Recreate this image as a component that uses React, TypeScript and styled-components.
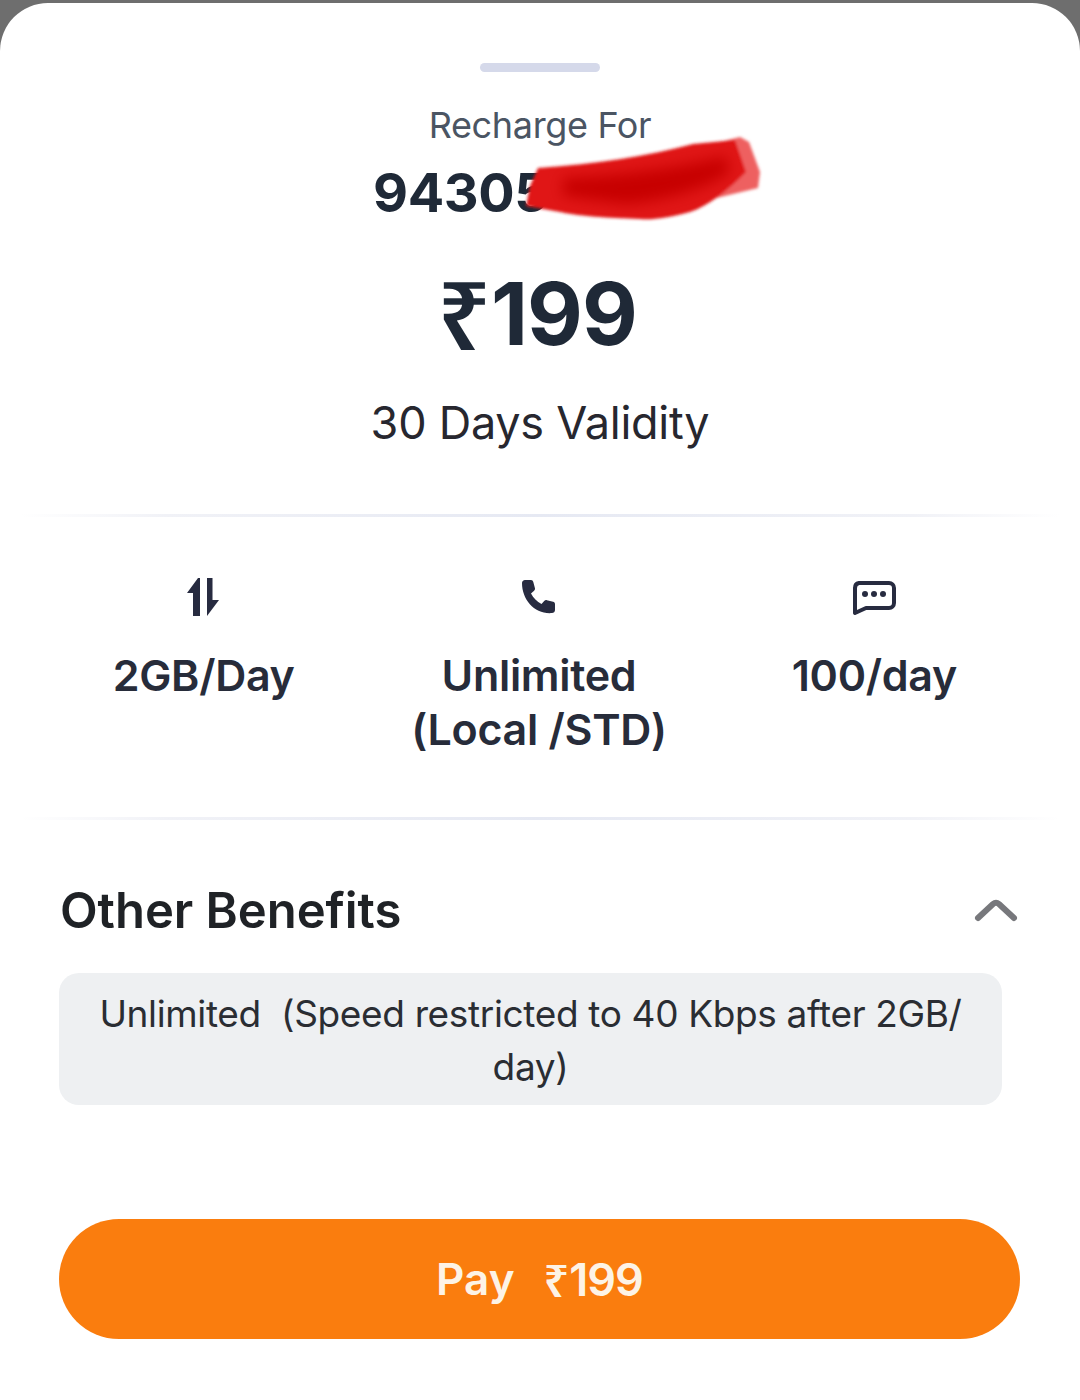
import React from "react";
import styled, { createGlobalStyle } from "styled-components";

const Global = createGlobalStyle`
  html, body { margin: 0; padding: 0; background: #6e6e6e; }
  body { font-family: Inter, "Noto Sans", sans-serif; }
`;

const Page = styled.div`
  width: 1080px;
  height: 1400px;
  padding-top: 3px;
  box-sizing: border-box;
  overflow: hidden;
`;

const Sheet = styled.main`
  height: 1397px;
  background: #fff;
  border-radius: 48px 48px 0 0;
  display: flex;
  flex-direction: column;
  align-items: center;
  color: #1f2937;
`;

const Handle = styled.div`
  width: 120px;
  height: 9px;
  margin-top: 60px;
  border-radius: 5px;
  background: #d5d9ea;
`;

const Label = styled.div`
  margin-top: 30px;
  font-size: 36px;
  line-height: 46px;
  letter-spacing: -0.35px;
  color: #4b5563;
`;

const NumberRow = styled.div`
  position: relative;
  width: 334px;
  margin-top: 13px;
  height: 64px;
  font-size: 54px;
  line-height: 64px;
  font-weight: 700;
  letter-spacing: -0.4px;
  color: #1f2937;
`;

const Scribble = styled.svg`
  position: absolute;
  left: 145px;
  top: -35px;
  width: 250px;
  height: 100px;
  overflow: visible;
`;

const Price = styled.div`
  margin-top: 34px;
  height: 110px;
  padding-right: 6px;
  display: flex;
  align-items: center;
  color: #1f2937;
`;

const Rupee = styled.span<{ $size: number }>`
  font-family: "Noto Sans", Roboto, sans-serif;
  font-size: ${(p) => p.$size}px;
  font-weight: 600;
`;

const Amount = styled.span<{ $size: number; $weight: number }>`
  font-family: Inter, sans-serif;
  font-size: ${(p) => p.$size}px;
  font-weight: ${(p) => p.$weight};
  letter-spacing: -1px;
`;

const Validity = styled.div`
  margin-top: 27px;
  font-size: 45px;
  line-height: 54px;
  letter-spacing: -0.25px;
  color: #27272f;
`;

const Divider = styled.div`
  align-self: stretch;
  flex: none;
  height: 3px;
  margin: 0 20px;
  background: linear-gradient(90deg, #ffffff 0%, #f1f2f7 14%, #e6e9f3 50%, #f1f2f7 86%, #ffffff 100%);
`;

const FirstDivider = styled(Divider)`
  margin-top: 64px;
`;

const Stats = styled.section`
  align-self: stretch;
  height: 300px;
  box-sizing: border-box;
  padding: 59px 38px 0 36px;
  display: grid;
  grid-template-columns: repeat(3, 1fr);
  text-align: center;
`;

const Stat = styled.div`
  display: flex;
  flex-direction: column;
  align-items: center;
`;

const StatIcon = styled.svg`
  width: 48px;
  height: 48px;
  color: #272b40;
`;

const StatText = styled.div`
  margin-top: 24px;
  font-size: 43px;
  line-height: 54px;
  font-weight: 600;
  letter-spacing: -0.3px;
  color: #272c3a;
  white-space: pre-line;
`;

const BenefitsHead = styled.header`
  align-self: stretch;
  display: flex;
  align-items: center;
  justify-content: space-between;
  margin-top: 61px;
  padding: 0 60px;
  height: 60px;
`;

const BenefitsTitle = styled.h2`
  margin: 0;
  font-size: 49px;
  line-height: 60px;
  font-weight: 600;
  letter-spacing: -0.05px;
  color: #1f2226;
`;

const Chevron = styled.svg`
  width: 46px;
  height: 28px;
  color: #77787c;
`;

const Note = styled.div`
  align-self: flex-start;
  width: 943px;
  height: 132px;
  box-sizing: border-box;
  margin: 32px 0 0 59px;
  padding: 14px 30px 0;
  border-radius: 20px;
  background: #eef0f2;
  font-size: 37px;
  line-height: 53px;
  letter-spacing: -0.35px;
  text-align: center;
  color: #2a2d33;
  white-space: pre-wrap;
`;

const PayButton = styled.button`
  align-self: flex-start;
  width: 961px;
  height: 120px;
  margin: 114px 0 0 59px;
  border: 0;
  border-radius: 60px;
  background: #fa7d0e;
  color: #fdf3e6;
  font-family: Inter, sans-serif;
  font-size: 44px;
  font-weight: 600;
  display: flex;
  align-items: center;
  justify-content: center;
  gap: 29px;
`;

const PayAmount = styled.span`
  display: flex;
  align-items: center;
`;

export default function App() {
  return (
    <Page>
      <Global />
      <Sheet>
        <Handle />
        <Label>Recharge For</Label>
        <NumberRow>
          94305
          <Scribble viewBox="0 0 250 100" aria-hidden="true">
            <defs>
              <filter id="soft" x="-10%" y="-20%" width="120%" height="140%">
                <feGaussianBlur stdDeviation="1.800" />
              </filter>
              <filter id="softer" x="-20%" y="-40%" width="140%" height="180%">
                <feGaussianBlur stdDeviation="7" />
              </filter>
            </defs>
            <g filter="url(#soft)">
              <path d="M170 24 L222 11 L231 16 L242 46 L240 62 L190 74 L170 60 Z" fill="#ee6061" />
              <path d="M20 42 C80 38 130 30 175 18 L217 14 L228 46 C208 66 190 80 172 86 C150 92 135 94 122 93 C90 92 60 90 42 86 L8 80 L12 60 Z" fill="#e01417" />
            </g>
            <path d="M45 52 C100 50 160 42 208 30 L212 46 C190 62 150 74 110 78 C85 76 65 72 45 70 Z" fill="#c70304" filter="url(#softer)" />
          </Scribble>
        </NumberRow>
        <Price>
          <Rupee $size={94}>₹</Rupee>
          <Amount $size={86} $weight={700}>199</Amount>
        </Price>
        <Validity>30 Days Validity</Validity>
        <FirstDivider />
        <Stats>
          <Stat>
            <StatIcon viewBox="0 0 48 48" aria-hidden="true">
              <path fill="currentColor" d="M18 2h2v38h-7V17H7z M27 2h5.500v22H39L27 40z" />
            </StatIcon>
            <StatText>2GB/Day</StatText>
          </Stat>
          <Stat>
            <StatIcon viewBox="0 0 48 48" aria-hidden="true">
              <path fill="currentColor" transform="translate(-2 -2.500)" d="M9 9.500c0-1.600 1.300-3 3-3h6c1.200 0 2 .8 2.300 1.900l1.600 6.200c.3 1 0 2-.8 2.700l-3.100 2.700c2.400 4.700 5.900 8.100 10.500 10.500l2.700-3c.7-.8 1.700-1.100 2.700-.8l6.200 1.600c1.100.3 1.900 1.100 1.900 2.300v6c0 1.700-1.400 3-3 3C22 41 9 26.500 9 9.500z" />
            </StatIcon>
            <StatText>{"Unlimited\n(Local /STD)"}</StatText>
          </Stat>
          <Stat>
            <StatIcon viewBox="0 0 48 48" aria-hidden="true">
              <path fill="none" stroke="currentColor" strokeWidth="4" strokeLinejoin="round" d="M9 7h30a5 5 0 0 1 5 5v15a5 5 0 0 1-5 5H16L5 37V12a5 5 0 0 1 4-5z" />
              <circle cx="15" cy="18" r="3" fill="currentColor" />
              <circle cx="24" cy="18" r="3" fill="currentColor" />
              <circle cx="33" cy="18" r="3" fill="currentColor" />
            </StatIcon>
            <StatText>100/day</StatText>
          </Stat>
        </Stats>
        <Divider />
        <BenefitsHead>
          <BenefitsTitle>Other Benefits</BenefitsTitle>
          <Chevron viewBox="0 0 46 28" aria-hidden="true">
            <path d="M4 21 L19 7 Q22 4.500 25 7 L40 21" fill="none" stroke="currentColor" strokeWidth="6" strokeLinecap="round" />
          </Chevron>
        </BenefitsHead>
        <Note>{"Unlimited  (Speed restricted to 40 Kbps after 2GB/\nday)"}</Note>
        <PayButton>
          <span>Pay</span>
          <PayAmount>
            <Rupee $size={45}>₹</Rupee>
            <Amount $size={45} $weight={600}>199</Amount>
          </PayAmount>
        </PayButton>
      </Sheet>
    </Page>
  );
}
